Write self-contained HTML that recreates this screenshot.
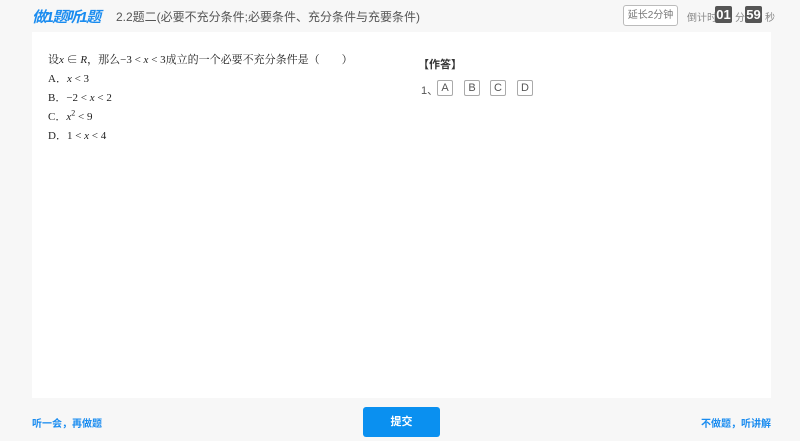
<!DOCTYPE html>
<html><head><meta charset="utf-8"><style>
*{margin:0;padding:0;box-sizing:border-box}
body{width:800px;height:441px;background:#f7f7f7;font-family:"Liberation Sans","Noto Sans CJK SC",sans-serif;position:relative;overflow:hidden;color:#333}
.abs{position:absolute;white-space:nowrap}
.card{position:absolute;left:32px;top:32px;width:739px;height:366px;background:#fff}
.logo{left:32px;top:6px;font-size:15px;font-weight:bold;font-style:italic;color:#1a8cf0;letter-spacing:-1.5px}
.title{left:116px;top:8px;font-size:12px;color:#555}
.btn1{left:623px;top:5px;width:55px;height:21px;border:1px solid #bbb;border-radius:3px;font-size:10px;color:#777;text-align:center;line-height:19px;background:#fff}
.cd{top:9px;font-size:10px;color:#888}
.box{top:6px;height:17px;background:#555;color:#fff;font-weight:bold;font-size:13px;line-height:17px;text-align:center;border-radius:2px}
.q{left:48px;font-family:"Liberation Serif","Noto Serif CJK SC",serif;font-size:11px;color:#222}
i{font-style:italic}
.opt{top:80px;width:16px;height:16px;border:1px solid #aaa;border-radius:2px;font-size:11px;color:#555;text-align:center;line-height:14px}
.link{top:415px;font-size:10px;font-weight:bold;color:#1a8cf0}
.sub{left:363px;top:407px;width:77px;height:30px;background:#0a90f0;border-radius:3px;color:#fff;font-size:11px;font-weight:bold;text-align:center;line-height:30px}
</style></head><body>
<div class="card"></div>
<div class="abs logo">做1题听1题</div>
<div class="abs title">2.2题二(必要不充分条件;必要条件、充分条件与充要条件)</div>
<div class="abs btn1">延长2分钟</div>
<div class="abs cd" style="left:687px">倒计时:</div>
<div class="abs box" style="left:715px;width:17px">01</div>
<div class="abs cd" style="left:735px">分</div>
<div class="abs box" style="left:745px;width:17px">59</div>
<div class="abs cd" style="left:765px">秒</div>
<div class="abs q" style="top:51px">设<i>x</i> ∈ <i>R</i>，那么−3 &lt; <i>x</i> &lt; 3成立的一个必要不充分条件是（　　）</div>
<div class="abs q" style="top:70px">A．<i>x</i> &lt; 3</div>
<div class="abs q" style="top:89px">B．−2 &lt; <i>x</i> &lt; 2</div>
<div class="abs q" style="top:108px">C．<i>x</i><sup style="font-size:8px">2</sup> &lt; 9</div>
<div class="abs q" style="top:127px">D．1 &lt; <i>x</i> &lt; 4</div>
<div class="abs" style="left:418px;top:56px;font-size:11px;font-weight:bold;color:#333">【作答】</div>
<div class="abs" style="left:421px;top:82px;font-size:11px;color:#555">1、</div>
<div class="abs opt" style="left:437px">A</div>
<div class="abs opt" style="left:464px">B</div>
<div class="abs opt" style="left:490px">C</div>
<div class="abs opt" style="left:517px">D</div>
<div class="abs link" style="left:32px">听一会，再做题</div>
<div class="abs sub">提交</div>
<div class="abs link" style="right:29px">不做题，听讲解</div>
</body></html>
